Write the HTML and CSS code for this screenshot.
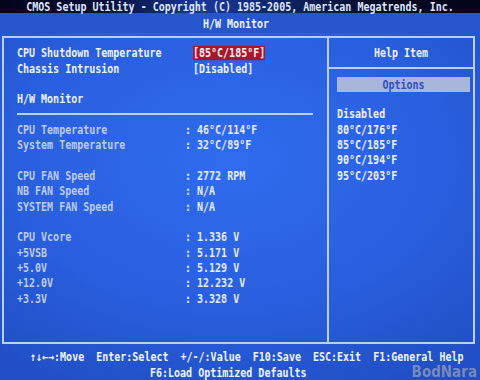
FILE: index.html
```html
<!DOCTYPE html>
<html>
<head>
<meta charset="utf-8">
<title>H/W Monitor</title>
<link rel="stylesheet" href="styles.css">
</head>
<body>
<div class="screen">
  <div class="topbar"><span>CMOS Setup Utility - Copyright (C) 1985-2005, American Megatrends, Inc.</span></div>
  <div class="titlebar"><span>H/W Monitor</span></div>
  <div class="frame">
    <div class="left">
      <div class="row set"><span>CPU Shutdown Temperature</span><span class="hl">[85°C/185°F]</span></div>
      <div class="row set"><span>Chassis Intrusion</span><span>[Disabled]</span></div>
      <div class="row"></div>
      <div class="row"><span>H/W Monitor</span></div>
      <div class="sep"></div>
      <div class="row hw"><span class="lbl">CPU Temperature</span><span>: 46°C/114°F</span></div>
      <div class="row hw"><span class="lbl">System Temperature</span><span>: 32°C/89°F</span></div>
      <div class="row"></div>
      <div class="row hw"><span class="lbl">CPU FAN Speed</span><span>: 2772 RPM</span></div>
      <div class="row hw"><span class="lbl">NB FAN Speed</span><span>: N/A</span></div>
      <div class="row hw"><span class="lbl">SYSTEM FAN Speed</span><span>: N/A</span></div>
      <div class="row"></div>
      <div class="row hw"><span class="lbl">CPU Vcore</span><span>: 1.336 V</span></div>
      <div class="row hw"><span class="lbl">+5VSB</span><span>: 5.171 V</span></div>
      <div class="row hw"><span class="lbl">+5.0V</span><span>: 5.129 V</span></div>
      <div class="row hw"><span class="lbl">+12.0V</span><span>: 12.232 V</span></div>
      <div class="row hw"><span class="lbl">+3.3V</span><span>: 3.328 V</span></div>
    </div>
    <div class="right">
      <div class="row center"><span>Help Item</span></div>
      <div class="hr"></div>
      <div class="opt"><span>Options</span></div>
      <div class="row"></div>
      <div class="list">
        <div class="row"><span>Disabled</span></div>
        <div class="row"><span>80°C/176°F</span></div>
        <div class="row"><span>85°C/185°F</span></div>
        <div class="row"><span>90°C/194°F</span></div>
        <div class="row"><span>95°C/203°F</span></div>
      </div>
    </div>
  </div>
  <div class="footer">
    <div class="row l1"><span>↑↓←→:Move  Enter:Select  +/-/:Value  F10:Save  ESC:Exit  F1:General Help</span></div>
    <div class="row l2"><span>F6:Load Optimized Defaults</span></div>
  </div>
  <div class="mark">BodNara</div>
</div>
</body>
</html>
```

FILE: styles.css
```css
* { box-sizing: border-box; margin: 0; padding: 0; }
html, body { width: 480px; height: 380px; overflow: hidden; }
body {
  font-family: "DejaVu Sans Mono", "Liberation Mono", monospace;
  font-weight: bold;
  font-size: 10px;
  color: #eef2ff;
  background: #2858d4;
}
.screen {
  position: relative;
  width: 480px;
  height: 380px;
  display: flex;
  flex-direction: column;
  background: radial-gradient(ellipse 75% 65% at 48% 42%, #2f6cee 0%, #2a60e0 55%, #2150c6 100%);
}
.topbar span, .titlebar span, .row span, .opt span {
  display: inline-block;
  transform: scaleY(1.2);
  white-space: pre;
}
.topbar {
  height: 13px;
  line-height: 13px;
  text-align: center;
  color: #dde7ff;
  background: linear-gradient(90deg, #03051a 0%, #080f38 22%, #1a389a 42%, #10246a 58%, #050920 80%, #03051a 100%);
}
.titlebar {
  height: 20px;
  line-height: 21px;
  text-align: center;
  padding-right: 8px;
  background: #2755cc;
}
.frame {
  margin: 3px 5px 0 2px;
  height: 309px;
  border: 2px solid #bccdf8;
  display: grid;
  grid-template-columns: 325px 1fr;
}
.left {
  border-right: 2px solid #bccdf8;
  padding: 7.33px 0 0 13px;
}
.right {
  padding-top: 7.33px;
}
.row {
  height: 15.33px;
  line-height: 15.33px;
}
.set {
  display: grid;
  grid-template-columns: 176px auto;
  justify-items: start;
  align-items: center;
}
.hw {
  display: grid;
  grid-template-columns: 168px auto;
  justify-items: start;
  color: #e6ecff;
}
.hw .lbl { color: #bfcbec; }
.row span.hl {
  background: #a8162e;
  color: #fff4f4;
  line-height: 11.6px;
}
.sep {
  height: 15.33px;
  width: 296px;
  display: flex;
  align-items: center;
}
.sep::after {
  content: "";
  display: block;
  width: 100%;
  height: 2px;
  background: #bccdf8;
}
.center { text-align: center; }
.hr {
  height: 15.33px;
  display: flex;
  align-items: center;
}
.hr::after {
  content: "";
  display: block;
  width: 100%;
  height: 2px;
  background: #bccdf8;
}
.opt {
  margin: 1px 3px 0 8px;
  height: 15px;
  line-height: 15px;
  text-align: center;
  background: #a9b6dc;
  color: #2e4ec4;
}
.list {
  padding-left: 8px;
  margin-top: -1px;
}
.footer {
  padding-top: 5.3px;
  color: #f0f4ff;
}
.l1 { padding-left: 30px; }
.l2 { padding-left: 150px; }
.mark {
  position: absolute;
  right: 3px;
  bottom: 1px;
  font-family: "DejaVu Sans", sans-serif;
  font-weight: bold;
  font-size: 13.5px;
  line-height: 13px;
  letter-spacing: 0;
  color: rgba(190, 200, 232, 0.55);
  transform: scaleY(1.2);
  transform-origin: bottom right;
  text-shadow: 0 0 1px rgba(40, 60, 120, 0.7);
}
```
